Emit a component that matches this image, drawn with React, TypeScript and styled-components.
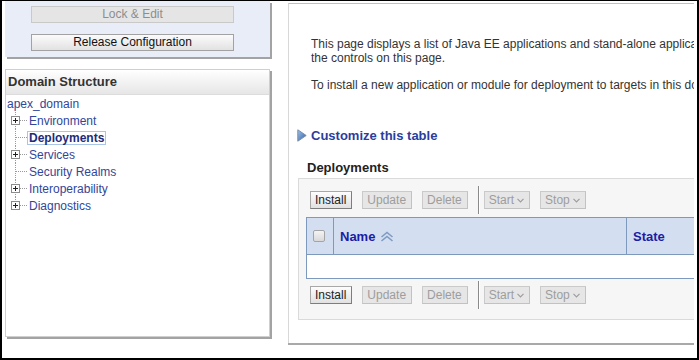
import React from 'react';
import styled, { createGlobalStyle } from 'styled-components';

const GlobalStyle = createGlobalStyle`
  body {
    margin: 0;
    font-family: "Liberation Sans", Arial, sans-serif;
    background: #fff;
  }
`;

const Frame = styled.div`
  width: 699px;
  height: 360px;
  box-sizing: border-box;
  border: 2px solid #000;
  border-top-width: 1px;
  display: flex;
  overflow: hidden;
  background: #fff;
`;

const LeftColumn = styled.div`
  width: 270px;
  flex: none;
  padding-left: 3px;
  display: flex;
  flex-direction: column;
`;

const ChangeCenter = styled.div`
  width: 265px;
  height: 56px;
  box-sizing: border-box;
  background: #e8edf8;
  box-shadow: 2px 2px 0 #a3a3a3;
  padding: 5px 0 0 26px;
  display: flex;
  flex-direction: column;
  gap: 11px;
`;

const CenterButton = styled.button<{ $disabled?: boolean }>`
  width: 203px;
  height: 17px;
  box-sizing: border-box;
  padding: 0;
  font-family: "Liberation Sans", Arial, sans-serif;
  font-size: 12px;
  line-height: 15px;
  border: 1px solid ${p => (p.$disabled ? '#c9c9c9' : '#a2a2a2')};
  background: ${p =>
    p.$disabled ? '#e5e5e5' : 'linear-gradient(#fbfbfb, #e2e2e2)'};
  color: ${p => (p.$disabled ? '#8d8d8d' : '#111')};
`;

const DomainPanel = styled.div`
  margin-top: 12px;
  width: 265px;
  height: 268px;
  box-sizing: border-box;
  border: 1px solid #cfcfcf;
  box-shadow: 2px 2px 0 #a3a3a3;
  background: #fff;
`;

const PanelHeader = styled.div`
  height: 24px;
  line-height: 24px;
  padding-left: 2px;
  background: linear-gradient(#ffffff, #e6e6e6);
  border-bottom: 1px solid #dcdcdc;
  font-size: 13px;
  font-weight: bold;
  color: #333;
`;

const Tree = styled.div`
  padding: 0 0 0 1px;
`;

const TreeRow = styled.div<{ $indent?: boolean }>`
  height: 17px;
  display: flex;
  align-items: center;
  padding-left: ${p => (p.$indent ? '4px' : '0')};
`;

const TreeLink = styled.a<{ $selected?: boolean }>`
  font-size: 12px;
  line-height: 12px;
  color: ${p => (p.$selected ? '#1d2c7c' : '#31469b')};
  font-weight: ${p => (p.$selected ? 'bold' : 'normal')};
  text-decoration: none;
  padding: 0 1px;
  border: 1px solid ${p => (p.$selected ? '#a9c6ea' : 'transparent')};
  margin-left: -2px;
`;

const MainPanel = styled.div`
  flex: 1;
  margin: 2px 3px 0 13px;
  height: 340px;
  box-sizing: border-box;
  border-top: 1px solid #b3c2d4;
  border-left: 1px solid #d8d8d8;
  box-shadow: 0 2px 0 #a9a9a9;
  padding: 33px 0 0 8px;
  overflow: hidden;
  min-width: 0;
`;

const Para = styled.p`
  margin: 0 0 13px;
  padding-left: 14px;
  font-size: 12px;
  line-height: 14px;
  color: #333;
  white-space: nowrap;
`;

const Customize = styled.a`
  margin-top: 35px;
  height: 16px;
  display: flex;
  align-items: center;
  gap: 4px;
  font-size: 13px;
  font-weight: bold;
  color: #2b3d9d;
  text-decoration: none;
`;

const SectionTitle = styled.div`
  margin-top: 17px;
  padding-left: 10px;
  height: 16px;
  line-height: 16px;
  font-size: 13px;
  font-weight: bold;
  color: #222;
`;

const TableBox = styled.div`
  margin: 2px 0 0 1px;
  width: 540px;
  height: 142px;
  box-sizing: border-box;
  border: 1px solid #dadada;
  background: #f6f6f6;
  padding: 7px 0 0 7px;
`;

const Toolbar = styled.div`
  height: 28px;
  display: flex;
  align-items: center;
  padding-left: 4px;
`;

const ToolButton = styled.button<{ $disabled?: boolean }>`
  height: 18px;
  box-sizing: border-box;
  margin-right: 10px;
  padding: 0 5px 0 4px;
  display: flex;
  align-items: center;
  gap: 3px;
  font-family: "Liberation Sans", Arial, sans-serif;
  font-size: 12px;
  color: ${p => (p.$disabled ? '#9d9d9d' : '#222')};
  background: ${p =>
    p.$disabled ? '#e6e6e6' : 'linear-gradient(#fdfdfd, #e1e1e1)'};
  border: 1px solid ${p => (p.$disabled ? '#cacaca' : '#a8a8a8')};
  border-right-color: ${p => (p.$disabled ? '#c2c2c2' : '#7d7d7d')};
  border-bottom-color: ${p => (p.$disabled ? '#c2c2c2' : '#7d7d7d')};
`;

const Separator = styled.div`
  width: 1px;
  height: 28px;
  background: #8a8a8a;
  border-right: 1px solid #fff;
  margin-right: 4px;
`;

const Table = styled.table`
  margin: 3px 0 2px;
  border-collapse: collapse;
  width: 520px;
  table-layout: fixed;
  border: 1px solid #7d99bb;
`;

const HeadCell = styled.th<{ $w: number }>`
  width: ${p => p.$w}px;
  height: 36px;
  padding: 0 0 0 6px;
  background: #d3dff0;
  border-right: 1px solid #7d99bb;
  text-align: left;
  font-size: 13px;
  font-weight: bold;
  color: #1c1ca4;
  white-space: nowrap;
`;

const CheckCell = styled.th`
  width: 20px;
  height: 36px;
  padding: 0 0 0 6px;
  background: #d3dff0;
  border-right: 1px solid #7d99bb;
  text-align: left;
`;

const CheckBox = styled.span`
  display: block;
  width: 12px;
  height: 12px;
  box-sizing: border-box;
  border: 1px solid #a4a4a4;
  border-radius: 2px;
  background: linear-gradient(#f4f4f4, #d9d9d9);
`;

const HeadInner = styled.span`
  display: inline-flex;
  align-items: center;
  gap: 5px;
`;

const EmptyCell = styled.td`
  height: 23px;
  padding: 0;
  background: #fff;
  border-top: 1px solid #7d99bb;
`;

const Gutter = ({ plus, last }: { plus?: boolean; last?: boolean }) => (
  <svg width="18" height="17" viewBox="0 0 18 17" style={{ flex: 'none' }}>
    <line x1="4.5" y1="0" x2="4.5" y2={last ? 8.5 : 17} stroke="#9a9a9a" strokeDasharray="1 1" />
    <line x1="5" y1="8.5" x2="17" y2="8.5" stroke="#9a9a9a" strokeDasharray="1 1" />
    {plus && (
      <g>
        <rect x="0.5" y="4.5" width="8" height="8" fill="#fff" stroke="#8c8c8c" />
        <line x1="2" y1="8.5" x2="7" y2="8.5" stroke="#222" />
        <line x1="4.5" y1="6" x2="4.5" y2="11" stroke="#222" />
      </g>
    )}
  </svg>
);

const Caret = () => (
  <svg width="7" height="5" viewBox="0 0 7 5">
    <polyline points="0.5,0.8 3.5,3.8 6.5,0.8" fill="none" stroke="#9d9d9d" strokeWidth="1.2" />
  </svg>
);

const Triangle = () => (
  <svg width="10" height="13" viewBox="0 0 10 13">
    <defs>
      <linearGradient id="tri" x1="0" y1="0" x2="1" y2="1">
        <stop offset="0" stopColor="#9fc3ec" />
        <stop offset="1" stopColor="#2d5fa8" />
      </linearGradient>
    </defs>
    <polygon points="0.8,0.8 9.2,6.5 0.8,12.2" fill="url(#tri)" stroke="#7a8ea8" strokeWidth="1" />
  </svg>
);

const SortIcon = () => (
  <svg width="14" height="11" viewBox="0 0 14 11">
    <polyline points="1.5,6 7,1.5 12.5,6" fill="none" stroke="#7f9bc3" strokeWidth="1.6" />
    <polyline points="1.5,10 7,5.5 12.5,10" fill="none" stroke="#7f9bc3" strokeWidth="1.6" />
  </svg>
);

const ButtonBar = () => (
  <Toolbar>
    <ToolButton>Install</ToolButton>
    <ToolButton $disabled>Update</ToolButton>
    <ToolButton $disabled>Delete</ToolButton>
    <Separator />
    <ToolButton $disabled>
      Start <Caret />
    </ToolButton>
    <ToolButton $disabled>
      Stop <Caret />
    </ToolButton>
  </Toolbar>
);

const treeItems = [
  { label: 'Environment', plus: true },
  { label: 'Deployments', selected: true },
  { label: 'Services', plus: true },
  { label: 'Security Realms' },
  { label: 'Interoperability', plus: true },
  { label: 'Diagnostics', plus: true }
];

export default function App() {
  return (
    <>
      <GlobalStyle />
      <Frame>
        <LeftColumn>
          <ChangeCenter>
            <CenterButton $disabled>Lock &amp; Edit</CenterButton>
            <CenterButton>Release Configuration</CenterButton>
          </ChangeCenter>
          <DomainPanel>
            <PanelHeader>Domain Structure</PanelHeader>
            <Tree>
              <TreeRow>
                <TreeLink href="#">apex_domain</TreeLink>
              </TreeRow>
              {treeItems.map((item, i) => (
                <TreeRow $indent key={item.label}>
                  <Gutter plus={item.plus} last={i === treeItems.length - 1} />
                  <TreeLink href="#" $selected={item.selected}>
                    {item.label}
                  </TreeLink>
                </TreeRow>
              ))}
            </Tree>
          </DomainPanel>
        </LeftColumn>

        <MainPanel>
          <Para>
            This page displays a list of Java EE applications and stand-alone application modules that have been installed to this domain.
            <br />
            the controls on this page.
          </Para>
          <Para>
            To install a new application or module for deployment to targets in this domain, click the Install button.
          </Para>
          <Customize href="#">
            <Triangle />
            Customize this table
          </Customize>
          <SectionTitle>Deployments</SectionTitle>
          <TableBox>
            <ButtonBar />
            <Table>
              <thead>
                <tr>
                  <CheckCell>
                    <CheckBox />
                  </CheckCell>
                  <HeadCell $w={286}>
                    <HeadInner>
                      Name <SortIcon />
                    </HeadInner>
                  </HeadCell>
                  <HeadCell $w={194}>State</HeadCell>
                </tr>
              </thead>
              <tbody>
                <tr>
                  <EmptyCell colSpan={3} />
                </tr>
              </tbody>
            </Table>
            <ButtonBar />
          </TableBox>
        </MainPanel>
      </Frame>
    </>
  );
}
